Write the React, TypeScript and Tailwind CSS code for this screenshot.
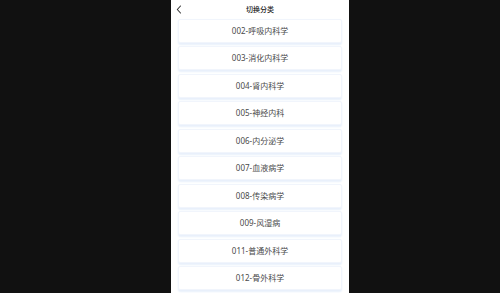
const items = [
  '002-呼吸内科学',
  '003-消化内科学',
  '004-肾内科学',
  '005-神经内科',
  '006-内分泌学',
  '007-血液病学',
  '008-传染病学',
  '009-风湿病',
  '011-普通外科学',
  '012-骨外科学',
];

export default function App() {
  return (
    <div className="flex h-[293px] w-[500px] overflow-hidden bg-[#111111] pl-[171px]">
      <div className="flex w-[178px] flex-col bg-white" style={{ fontFamily: '"Noto Sans", "Noto Sans CJK SC", sans-serif' }}>
        {/* header */}
        <div className="relative flex h-[19px] shrink-0 items-center justify-center">
          <svg className="absolute left-[5px] top-[5px]" width="6" height="9" viewBox="0 0 6 9" fill="none">
            <path d="M4.5 1 L1.3 4.5 L4.5 8" stroke="#333" strokeWidth="1.1" strokeLinecap="round" strokeLinejoin="round" />
          </svg>
          <span className="text-[7px] font-medium leading-none text-[#222]">切换分类</span>
        </div>

        {/* list */}
        <div className="flex flex-col gap-[3.44px] px-[7px]">
          {items.map((name) => (
            <div
              key={name}
              className="flex h-[24px] shrink-0 items-center justify-center rounded-[2px] border border-[#f1f5fc] bg-white shadow-[0_1.5px_2px_#e8f0fb]"
            >
              <span className="text-[8px] leading-none text-[#4a4a4a]">{name}</span>
            </div>
          ))}
        </div>
      </div>
    </div>
  );
}
